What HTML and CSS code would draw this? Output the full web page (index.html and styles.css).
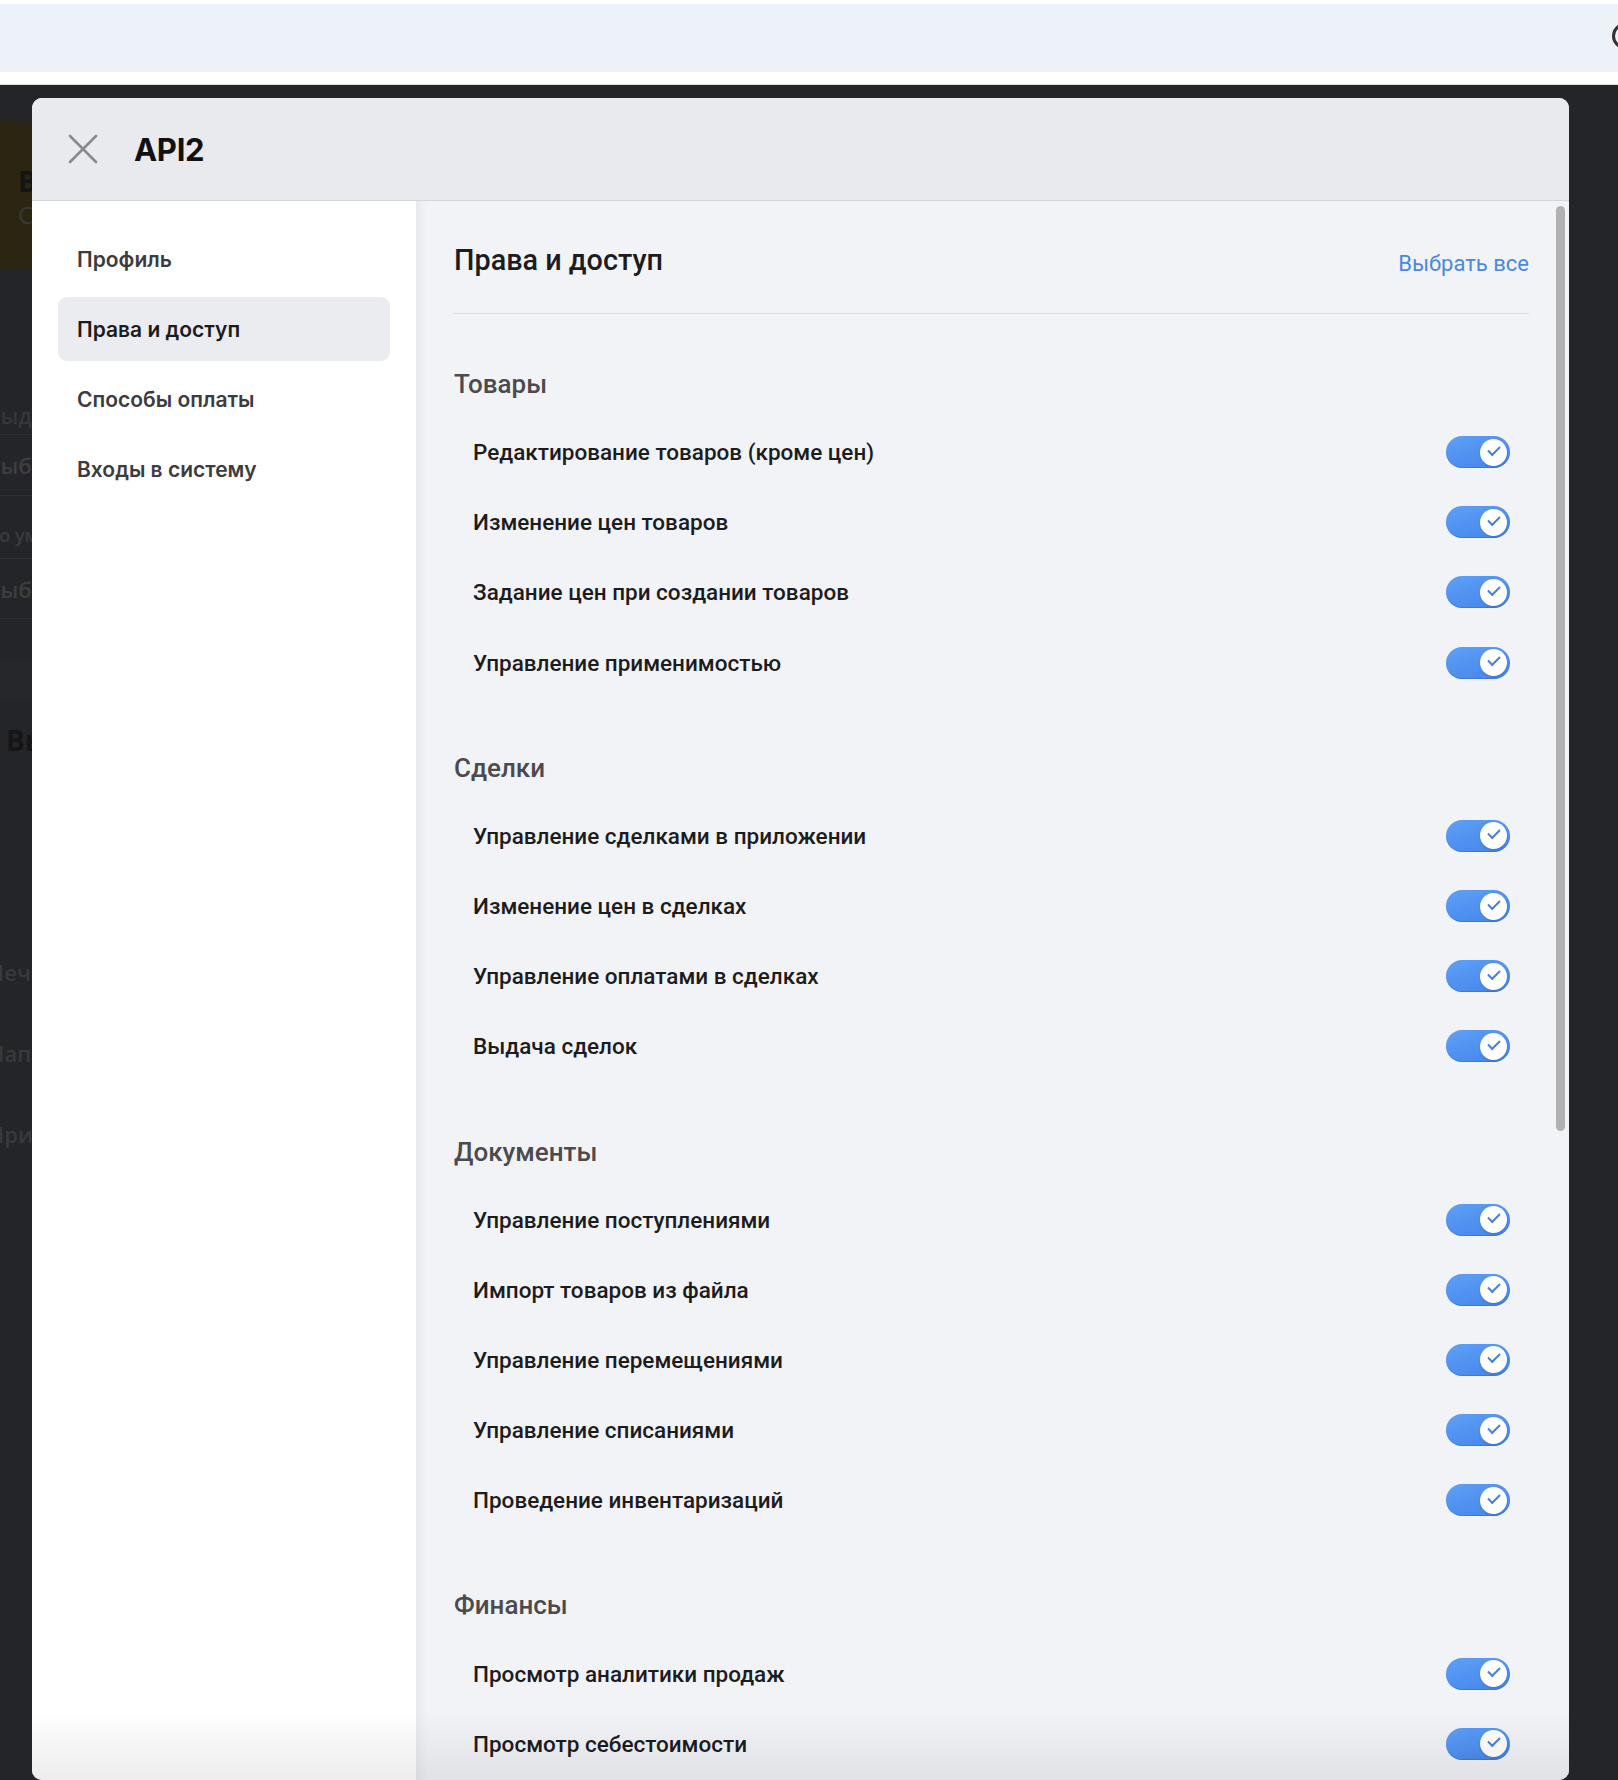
FILE: index.html
```html
<!DOCTYPE html>
<html lang="ru">
<head>
    <meta charset="UTF-8">
    <meta name="viewport" content="width=device-width, initial-scale=1.0">
    <title>API2 — Права и доступ</title>
    <link rel="stylesheet" href="styles.css">
</head>
<body>
    <div class="topbar">
        <div class="topbar-band"><span class="avatar"></span></div>
    </div>

    <!-- страница под затемнением -->
    <div class="page">
        <div class="page-hero">
            <div class="hero-title">Выдача</div>
            <div class="hero-sub">Сделки</div>
        </div>
        <div class="page-list">
            <div class="page-row first">Выдача</div>
            <div class="page-row">Выбрать</div>
            <div class="page-row small">По умолчанию</div>
            <div class="page-row last">Выбрать</div>
        </div>
        <div class="page-band"></div>
        <div class="page-title">Вы</div>
        <div class="page-links">
            <div class="page-link">Печать</div>
            <div class="page-link">Написать</div>
            <div class="page-link">Приложения</div>
        </div>
    </div>

    <div class="modal">
        <header class="modal-head">
            <button class="close-btn" aria-label="Закрыть">
                <svg width="30" height="30" viewBox="0 0 30 30">
                    <path d="M2 2 L28 28 M28 2 L2 28" stroke="#8a8a8e" stroke-width="2.6" stroke-linecap="round" fill="none"/>
                </svg>
            </button>
            <h1 class="modal-title">API2</h1>
        </header>

        <div class="modal-body">
            <nav class="side-nav">
                <a class="nav-item">Профиль</a>
                <a class="nav-item active">Права и доступ</a>
                <a class="nav-item">Способы оплаты</a>
                <a class="nav-item">Входы в систему</a>
            </nav>

            <main class="content">
                <div class="content-head">
                    <h2>Права и доступ</h2>
                    <a class="select-all">Выбрать все</a>
                </div>

                <section class="perm-group">
                    <h3>Товары</h3>
                    <div class="perm-row"><span>Редактирование товаров (кроме цен)</span><span class="toggle on"><span class="knob"></span></span></div>
                    <div class="perm-row"><span>Изменение цен товаров</span><span class="toggle on"><span class="knob"></span></span></div>
                    <div class="perm-row"><span>Задание цен при создании товаров</span><span class="toggle on"><span class="knob"></span></span></div>
                    <div class="perm-row"><span>Управление применимостью</span><span class="toggle on"><span class="knob"></span></span></div>
                </section>

                <section class="perm-group">
                    <h3>Сделки</h3>
                    <div class="perm-row"><span>Управление сделками в приложении</span><span class="toggle on"><span class="knob"></span></span></div>
                    <div class="perm-row"><span>Изменение цен в сделках</span><span class="toggle on"><span class="knob"></span></span></div>
                    <div class="perm-row"><span>Управление оплатами в сделках</span><span class="toggle on"><span class="knob"></span></span></div>
                    <div class="perm-row"><span>Выдача сделок</span><span class="toggle on"><span class="knob"></span></span></div>
                </section>

                <section class="perm-group">
                    <h3>Документы</h3>
                    <div class="perm-row"><span>Управление поступлениями</span><span class="toggle on"><span class="knob"></span></span></div>
                    <div class="perm-row"><span>Импорт товаров из файла</span><span class="toggle on"><span class="knob"></span></span></div>
                    <div class="perm-row"><span>Управление перемещениями</span><span class="toggle on"><span class="knob"></span></span></div>
                    <div class="perm-row"><span>Управление списаниями</span><span class="toggle on"><span class="knob"></span></span></div>
                    <div class="perm-row"><span>Проведение инвентаризаций</span><span class="toggle on"><span class="knob"></span></span></div>
                </section>

                <section class="perm-group">
                    <h3>Финансы</h3>
                    <div class="perm-row"><span>Просмотр аналитики продаж</span><span class="toggle on"><span class="knob"></span></span></div>
                    <div class="perm-row"><span>Просмотр себестоимости</span><span class="toggle on"><span class="knob"></span></span></div>
                </section>
            </main>

            <div class="scroll-thumb"></div>
        </div>
    </div>
</body>
</html>
```

FILE: styles.css
```css
* {
    box-sizing: border-box;
}

body {
    margin: 0;
    font-family: Inter, "Noto Sans", sans-serif;
    background-color: #242528;
    overflow: hidden;
    height: 1780px;
}

/* верхняя полоса */
.topbar {
    background-color: #fff;
    padding-top: 4px;
    height: 85px;
    border-bottom: 1px solid #d9d9dc;
}

.topbar-band {
    height: 68px;
    background-color: #edf1f8;
    position: relative;
    overflow: hidden;
}

.avatar {
    position: absolute;
    right: -20px;
    top: 19px;
    width: 26px;
    height: 26px;
    border-radius: 50%;
    border: 3px solid #333;
}

/* страница под оверлеем */
.page {
    width: 900px;
    background-color: #242528;
    font-family: "Open Sans", sans-serif;
}

.page-hero {
    margin-top: 37px;
    height: 147px;
    background-color: #2a2612;
    padding: 42px 0 0 18px;
}

.hero-title {
    font-size: 28px;
    font-weight: 700;
    color: #141414;
    line-height: 34px;
}

.hero-sub {
    font-size: 24px;
    color: #3a3833;
    line-height: 34px;
}

.page-list {
    margin-top: 126px;
}

.page-row {
    height: 61px;
    line-height: 61px;
    border-bottom: 1px solid #2e2f32;
    font-size: 22px;
    font-weight: 600;
    color: #3d3e41;
    margin-left: -14px;
}

.page-row.first {
    height: 40px;
    line-height: 40px;
    color: #353639;
}

.page-row.small {
    height: 63px;
    padding-top: 14px;
    line-height: 50px;
    font-size: 18px;
    color: #3a3b3e;
}

.page-row.last {
    height: 60px;
    line-height: 60px;
}

.page-band {
    height: 42px;
    margin-top: 40px;
    background-color: #26272a;
}

.page-title {
    margin-top: 20px;
    font-size: 28px;
    font-weight: 700;
    color: #151517;
    padding-left: 6px;
}

.page-links {
    margin-top: 198px;
}

.page-link {
    height: 81px;
    font-size: 22px;
    font-weight: 600;
    color: #38393c;
    margin-left: -12px;
}

/* модальное окно */
.modal {
    position: absolute;
    left: 32px;
    top: 98px;
    width: 1537px;
    height: 1682px;
    background-color: #fff;
    border-radius: 10px;
    overflow: hidden;
}

.modal::after {
    content: "";
    position: absolute;
    left: 0;
    right: 0;
    bottom: 0;
    height: 70px;
    background: linear-gradient(rgba(0,0,0,0), rgba(0,0,0,0.07));
    pointer-events: none;
}

.modal-head {
    height: 103px;
    background-color: #e9eaee;
    border-bottom: 1px solid #d5d6da;
    display: flex;
    align-items: center;
    padding-left: 36px;
}

.close-btn {
    width: 30px;
    height: 30px;
    padding: 0;
    border: none;
    background: none;
    cursor: pointer;
    display: flex;
}

.modal-title {
    margin: 0 0 0 36px;
    font-size: 31px;
    font-weight: 700;
    color: #111;
    letter-spacing: -0.3px;
}

.modal-body {
    display: grid;
    grid-template-columns: 384px 1fr;
    height: 1579px;
    position: relative;
}

/* боковое меню */
.side-nav {
    background-color: #fff;
    padding: 26px 26px;
    display: flex;
    flex-direction: column;
    gap: 6px;
}

.nav-item {
    height: 64px;
    display: flex;
    align-items: center;
    padding-left: 19px;
    border-radius: 9px;
    font-size: 21px;
    font-weight: 600;
    color: #3c3c40;
    cursor: pointer;
}

.nav-item.active {
    background-color: #ebecf0;
    color: #1c1c1e;
}

/* основная часть */
.content {
    background-color: #f2f3f7;
    box-shadow: inset 10px 0 12px -8px rgba(0,0,0,0.07);
    padding: 39px 40px 0 38px;
    font-family: Roboto, "Noto Sans", sans-serif;
}

.content-head {
    display: flex;
    justify-content: space-between;
    align-items: center;
    height: 74px;
    padding-bottom: 33px;
    border-bottom: 1px solid #dcdde2;
}

.content-head h2 {
    margin: 0;
    font-size: 28.8px;
    font-weight: 500;
    color: #1c1c1e;
}

.select-all {
    font-size: 22px;
    color: #4a88e2;
    cursor: pointer;
    margin-top: 6px;
}

.perm-group {
    margin-top: 52px;
}

.perm-group h3 {
    margin: 0 0 15px;
    height: 36px;
    line-height: 36px;
    font-size: 26px;
    font-weight: 500;
    color: #4b4b4f;
}

.perm-row {
    height: 70.2px;
    display: flex;
    justify-content: space-between;
    align-items: center;
    padding: 0 19px 0 19px;
    font-size: 22.5px;
    font-weight: 500;
    color: #1c1c1e;
}

/* переключатели */
.toggle {
    position: relative;
    width: 64px;
    height: 32px;
    border-radius: 16px;
    background: linear-gradient(160deg, #5fa0f7, #4283ea);
    box-shadow: inset 0 -1px 0 rgba(40,90,190,0.35);
    cursor: pointer;
}

.knob {
    position: absolute;
    right: 3px;
    top: 2.5px;
    width: 27px;
    height: 27px;
    border-radius: 50%;
    background-color: #fff;
    box-shadow: 0 1px 2px rgba(0,0,0,0.15);
}

.knob::after {
    content: "";
    position: absolute;
    left: 8px;
    top: 7px;
    width: 10px;
    height: 5px;
    border-left: 2.5px solid #4a7fd8;
    border-bottom: 2.5px solid #4a7fd8;
    transform: rotate(-45deg);
}

.scroll-thumb {
    position: absolute;
    right: 4px;
    top: 5px;
    width: 9px;
    height: 925px;
    border-radius: 5px;
    background-color: #b1b1b4;
}
```
